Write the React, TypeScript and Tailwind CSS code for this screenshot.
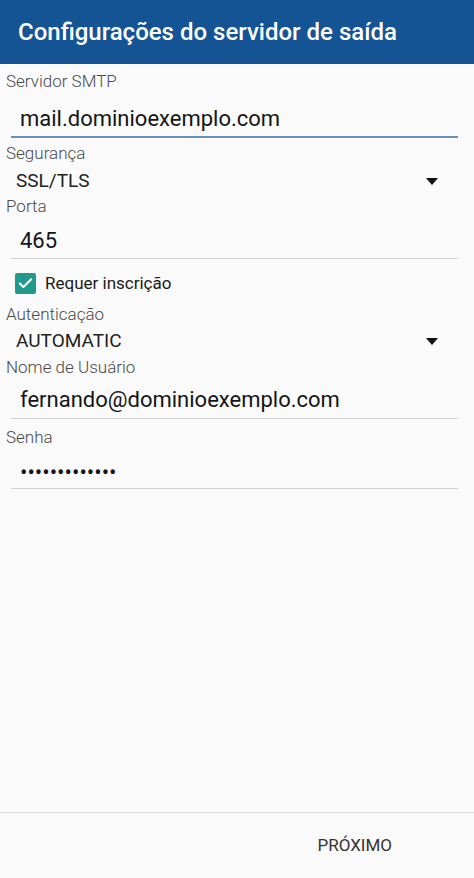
import { Check } from 'lucide-react'

function Label({ text, h }: { text: string; h: string }) {
  return (
    <div className={`${h} flex items-center px-[6px] text-[17px] font-light text-[#4a4a4a]`}>
      {text}
    </div>
  )
}

function Field({ value, h, focused }: { value: string; h: string; focused?: boolean }) {
  return (
    <div className="pl-[11px] pr-[16px]">
      <div
        className={`${h} flex items-center pl-[9px] text-[22px] text-[#151515] ${
          focused ? 'border-b-2 border-[#6a8fba]' : 'border-b-[1.5px] border-[#d2d2d2]'
        }`}
      >
        {value}
      </div>
    </div>
  )
}

function Select({ value, h }: { value: string; h: string }) {
  return (
    <div className={`${h} flex items-center justify-between pl-[16px] pr-[36px] text-[19px] text-[#222]`}>
      <span>{value}</span>
      <svg width="12" height="7" viewBox="0 0 12 7">
        <path d="M0 0 L12 0 L6 7 Z" fill="#111" />
      </svg>
    </div>
  )
}

export default function App() {
  return (
    <div className="w-[474px] h-[878px] flex flex-col bg-[#fafafa] font-['Roboto',sans-serif]">
      <header className="h-16 shrink-0 bg-[#155494] flex items-center px-[18px]">
        <h1 className="text-[24px] font-medium text-white">
          Configurações do servidor de saída
        </h1>
      </header>

      <main className="flex-1">
        <Label text="Servidor SMTP" h="h-[36px]" />
        <Field value="mail.dominioexemplo.com" h="h-[38px]" focused />
        <Label text="Segurança" h="h-[32px]" />
        <Select value="SSL/TLS" h="h-[22px]" />
        <Label text="Porta" h="h-[30px]" />
        <Field value="465" h="h-[37px]" />

        <div className="h-[44px] flex items-start pt-[14px] pl-[15px] gap-[9px]">
          <div className="w-[21px] h-[21px] rounded-[2px] bg-[#1f9a8b] flex items-center justify-center">
            <Check size={17} strokeWidth={3} color="#fff" />
          </div>
          <span className="text-[17px] text-[#1a1a1a] leading-[21px]">Requer inscrição</span>
        </div>

        <Label text="Autenticação" h="h-[24px]" />
        <Select value="AUTOMATIC" h="h-[28px]" />
        <Label text="Nome de Usuário" h="h-[26px]" />
        <Field value="fernando@dominioexemplo.com" h="h-[38px]" />
        <Label text="Senha" h="h-[37px]" />
        <Field value="•••••••••••••" h="h-[33px]" />
      </main>

      <footer className="h-[66px] shrink-0 border-t border-[#dcdcdc] flex items-center justify-end pr-[82px]">
        <button className="text-[17px] text-[#333] font-normal">PRÓXIMO</button>
      </footer>
    </div>
  )
}
